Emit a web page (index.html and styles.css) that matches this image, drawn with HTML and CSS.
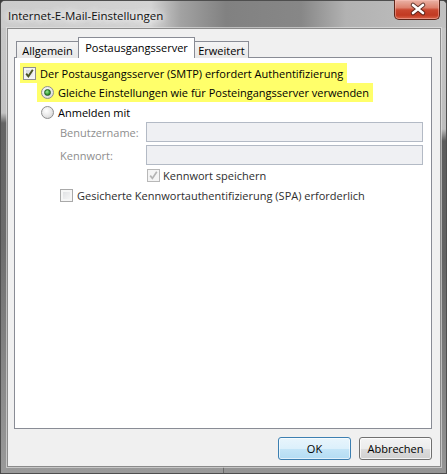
FILE: index.html
```html
<!DOCTYPE html>
<html lang="de">
<head>
<meta charset="utf-8">
<title>Internet-E-Mail-Einstellungen</title>
<link rel="stylesheet" href="styles.css">
</head>
<body>
<div class="window">
  <div class="titlebar">
    <span class="title">Internet-E-Mail-Einstellungen</span>
    <div class="close">
      <svg width="46" height="19" viewBox="0 0 46 19">
        <path d="M18 5 L28 13 M28 5 L18 13" stroke="#3a1a14" stroke-width="4.6" stroke-linecap="round" fill="none" opacity="0.75"/>
        <path d="M18 5 L28 13 M28 5 L18 13" stroke="#ffffff" stroke-width="2.6" stroke-linecap="round" fill="none"/>
      </svg>
    </div>
  </div>
  <div class="client">
    <div class="tabs">
      <div class="tab">Allgemein</div>
      <div class="tab active">Postausgangsserver</div>
      <div class="tab last">Erweitert</div>
    </div>
    <div class="panel">
      <div class="row hl hl1">
        <span class="cb">
          <svg width="11" height="11" viewBox="0 0 11 11"><path d="M2.2 5.6 L4.4 8.4 L8.8 1.8" fill="none" stroke="#4a5426" stroke-width="1.9"/></svg>
        </span>
        <span>Der Postausgangsserver (SMTP) erfordert Authentifizierung</span>
      </div>
      <div class="row hl hl2">
        <span class="rb on"><span class="dot"></span></span>
        <span>Gleiche Einstellungen wie für Posteingangsserver verwenden</span>
      </div>
      <div class="row r3">
        <span class="rb"></span>
        <span>Anmelden mit</span>
      </div>
      <div class="field">
        <span class="lbl">Benutzername:</span>
        <span class="input"></span>
      </div>
      <div class="field f2">
        <span class="lbl">Kennwort:</span>
        <span class="input"></span>
      </div>
      <div class="row r6">
        <span class="cb dis">
          <svg width="11" height="11" viewBox="0 0 11 11"><path d="M2.2 5.6 L4.4 8.4 L8.8 1.8" fill="none" stroke="#b4b4b4" stroke-width="1.7"/></svg>
        </span>
        <span class="dtext">Kennwort speichern</span>
      </div>
      <div class="row r7">
        <span class="cb off"></span>
        <span class="dtext">Gesicherte Kennwortauthentifizierung (SPA) erforderlich</span>
      </div>
    </div>
    <div class="buttons">
      <div class="btn default">OK</div>
      <div class="btn">Abbrechen</div>
    </div>
  </div>
</div>
</body>
</html>
```

FILE: styles.css
```css
* { box-sizing: border-box; }
html, body { margin: 0; padding: 0; }
body {
  width: 447px;
  height: 474px;
  overflow: hidden;
  background: #3c3c3c;
  font-family: "Open Sans", "Noto Sans", sans-serif;
  font-size: 11px;
  color: #000;
}
.window {
  width: 447px;
  height: 474px;
  display: flex;
  flex-direction: column;
  border: 1px solid #4e4e4e;
  border-radius: 5px 5px 0 0;
  background:
    linear-gradient(to bottom, #c8c8c8 0, #c3c3c3 112px, #646464 122px, #6c6c6c 240px, #858585 360px, #9a9a9a 100%) left / 50% 100% no-repeat,
    linear-gradient(to bottom, #c8c8c8 0, #bdbdbd 128px, #5c5c5c 140px, #646464 260px, #7c7c7c 360px, #959595 100%) right / 50% 100% no-repeat;
}
.titlebar {
  height: 27px;
  flex: none;
  display: flex;
  align-items: flex-start;
  padding-left: 7px;
  padding-right: 6px;
  border-radius: 4px 4px 0 0;
  background: linear-gradient(90deg, #cbcbcb 0, #d3d3d3 150px, #a2a2a2 180px, #818181 225px, #878787 300px, #b2b2b2 345px, #c1c1c1 100%);
}
.title {
  font-size: 11.5px;
  line-height: 27px;
  padding-top: 1px;
  color: #111;
  text-shadow: 0 0 6px #fff, 0 0 10px #fff, 0 0 14px rgba(255,255,255,0.9);
}
.close {
  margin-left: auto;
  width: 46px;
  height: 20px;
  margin-top: -1px;
  border: 1px solid #5e2519;
  border-top: none;
  border-radius: 0 0 5px 5px;
  background: linear-gradient(to bottom, #eab3a6 0, #dd826e 40%, #c9472f 52%, #c23a22 80%, #d8644a 100%);
  box-shadow: inset 0 0 0 1px rgba(255, 200, 190, 0.45);
}
.close svg { display: block; }
.client {
  height: 439px;
  margin: 0 5px 6px 6px;
  border: 1px solid #8b8b8b;
  background: #f0f0f0;
  padding: 8px 8px 0 6px;
  display: flex;
  flex-direction: column;
  box-shadow: 0 0 0 1px rgba(230, 230, 230, 0.6);
}
.tabs {
  display: flex;
  align-items: flex-end;
  height: 21px;
  padding-left: 2px;
  margin-bottom: -1px;
  position: relative;
  z-index: 1;
}
.tab {
  height: 17px;
  line-height: 16px;
  padding-top: 1px;
  text-align: center;
  border: 1px solid #898c95;
  border-bottom: none;
  background: linear-gradient(to bottom, #f4f4f4, #e8e8e8);
  width: 63px;
}
.tab.active {
  height: 21px;
  line-height: 19px;
  padding-top: 0;
  width: 117px;
  margin-left: -1px;
  background: #fff;
  position: relative;
  z-index: 2;
}
.tab.last {
  width: 55px;
  margin-left: -1px;
}
.panel {
  width: 418px;
  height: 372px;
  border: 1px solid #898c95;
  background: #fff;
  padding: 5px 0 0 5px;
  flex: none;
}
.row {
  display: flex;
  align-items: center;
  height: 20px;
  gap: 4px;
}
.hl {
  width: fit-content;
  background: #ffff6a;
}
.hl1 { padding: 0 4px 0 3px; }
.hl2 { height: 19px; margin-left: 17px; padding: 0 4px 0 4px; }
.r3 { margin-left: 21px; }
.field {
  display: flex;
  align-items: center;
  height: 20px;
  padding-left: 40px;
}
.f2 { margin-top: 3px; }
.lbl { width: 86px; color: #8e8e8e; }
.input {
  width: 277px;
  height: 20px;
  border: 1px solid #b3bac5;
  background: #eff0f3;
}
.r6 { padding-left: 127px; gap: 3px; }
.r7 { padding-left: 40px; }
.dtext { color: #2e2e2e; }
.cb {
  width: 13px;
  height: 13px;
  flex: none;
  border: 1px solid #8e8f8f;
  background: linear-gradient(135deg, #cfd2d6 0, #f8f8f8 100%);
  box-shadow: inset 0 0 0 2px #f5f5f5;
  display: flex;
  align-items: center;
  justify-content: center;
}
.cb svg { display: block; }
.cb.dis {
  border-color: #b8b8b8;
  background: #f4f4f4;
  box-shadow: none;
}
.cb.off {
  border-color: #a9a9a9;
  background: linear-gradient(135deg, #dcdde0 0, #f9f9f9 100%);
  box-shadow: inset 0 0 0 2px #f6f6f6;
}
.rb {
  width: 13px;
  height: 13px;
  flex: none;
  border-radius: 50%;
  border: 1px solid #8e8f8f;
  background: radial-gradient(circle at 40% 35%, #ffffff 0, #e6e6e6 55%, #c8c8c8 100%);
  display: flex;
  align-items: center;
  justify-content: center;
}
.rb .dot {
  width: 7px;
  height: 7px;
  border-radius: 50%;
  border: 1px solid #245e24;
  background: radial-gradient(circle at 40% 35%, #9ee79a 0, #38a23a 55%, #1a5f1c 100%);
}
.buttons {
  display: flex;
  justify-content: flex-end;
  gap: 8px;
  margin-top: 8px;
}
.btn {
  width: 73px;
  height: 23px;
  line-height: 21px;
  text-align: center;
  border: 1px solid #707070;
  border-radius: 3px;
  background: linear-gradient(to bottom, #f3f3f3 0, #ececec 50%, #dddddd 51%, #d0d0d0 100%);
  box-shadow: inset 0 0 0 1px rgba(255,255,255,0.75);
}
.btn.default {
  border-color: #3c7fb1;
  background: linear-gradient(to bottom, #e8f5fc 0, #dcf0fb 50%, #c4e5f7 51%, #b3dcf3 100%);
  box-shadow: inset 0 0 0 1px rgba(255,255,255,0.6);
}
```
